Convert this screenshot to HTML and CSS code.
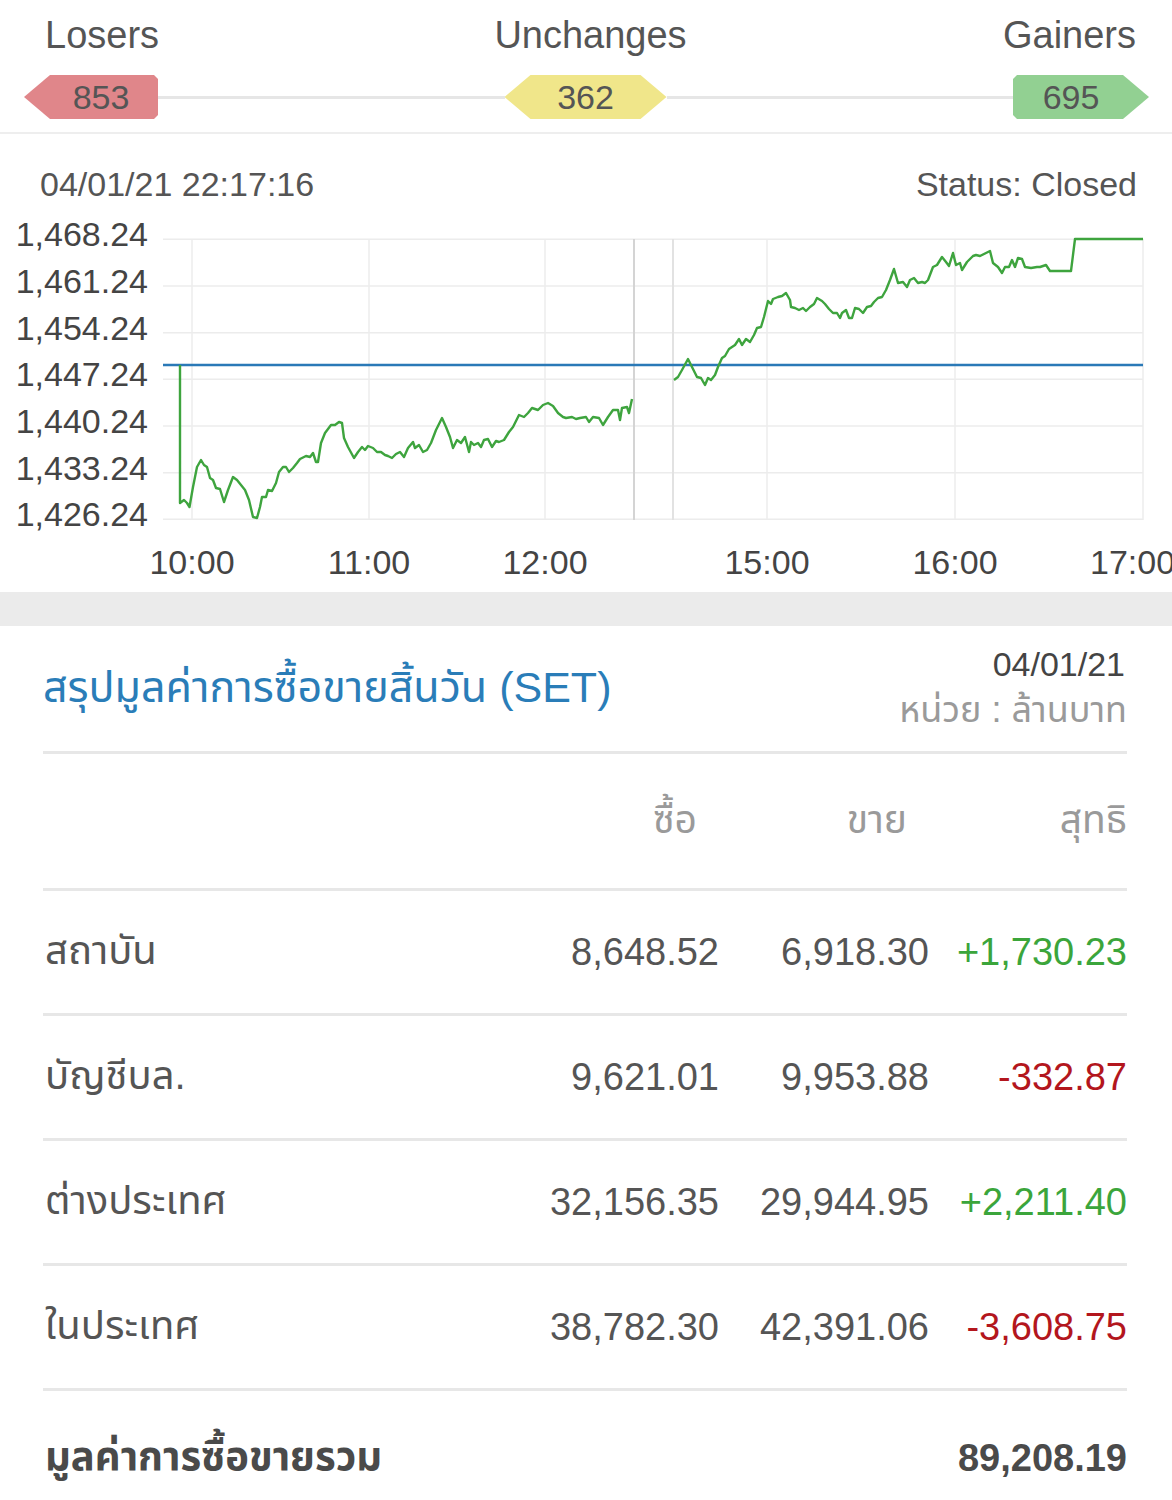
FILE: index.html
```html
<!DOCTYPE html>
<html lang="th">
<head>
<meta charset="utf-8">
<title>SET Summary</title>
<link rel="stylesheet" href="styles.css">
</head>
<body>
<section class="breadth">
  <div class="breadth-labels">
    <span>Losers</span>
    <span>Unchanges</span>
    <span class="lbl-right">Gainers</span>
  </div>
  <div class="breadth-bar">
    <div class="badge badge-down">853</div>
    <div class="track"></div>
    <div class="badge badge-flat">362</div>
    <div class="track"></div>
    <div class="badge badge-up">695</div>
  </div>
</section>

<section class="chart">
  <div class="chart-head">
    <span>04/01/21 22:17:16</span>
    <span>Status: Closed</span>
  </div>
  <svg class="chart-svg" width="1172" height="388" viewBox="0 204 1172 388" xmlns="http://www.w3.org/2000/svg">
    <g stroke="#ececec" stroke-width="1.5" fill="none">
      <line x1="163" y1="239.3" x2="1143" y2="239.3"/>
      <line x1="163" y1="286" x2="1143" y2="286"/>
      <line x1="163" y1="332.7" x2="1143" y2="332.7"/>
      <line x1="163" y1="379.3" x2="1143" y2="379.3"/>
      <line x1="163" y1="426" x2="1143" y2="426"/>
      <line x1="163" y1="472.7" x2="1143" y2="472.7"/>
      <line x1="163" y1="519.3" x2="1143" y2="519.3"/>
      <line x1="192" y1="239" x2="192" y2="520"/>
      <line x1="369" y1="239" x2="369" y2="520"/>
      <line x1="545" y1="239" x2="545" y2="520"/>
      <line x1="767" y1="239" x2="767" y2="520"/>
      <line x1="955" y1="239" x2="955" y2="520"/>
      <line x1="1143" y1="239" x2="1143" y2="520"/>
    </g>
    <line x1="634" y1="239" x2="634" y2="520" stroke="#d4d4d4" stroke-width="2"/>
    <line x1="673" y1="239" x2="673" y2="520" stroke="#e2e2e2" stroke-width="2"/>
    <line x1="163" y1="365" x2="1143" y2="365" stroke="#2a79b7" stroke-width="2.6"/>
    <polyline fill="none" stroke="#3ea43e" stroke-width="2.4" stroke-linejoin="round" points="180,365 180,503 184,500 187,503 189.5,507 193,487 197,467 201,460 204,465 207,467 210,478 213,480 216,488 220,489 224,502 228,490 233,477 237,480 241,485 245,490 249,500 253,517 257,518 260,507 262,497 266,497 268,490 272,491 276,483 279,472 283,467 286,467 289,472 293,468 297,463 300,459 306,456 310,457 313,453 316,462 318,462 321,443 325,433 328,429 331,425 335,425 339,422 342,423 344,438 348,447 354,458 358,452 362,447 365,450 368,446 373,448 377,452 381,452 385,455 388,456 392,458 396,454 400,452 404,457 408,448 413,442 415,448 419,445 423,452 427,450 431,443 436,430 442,418 446,427 450,437 453,448 457,440 461,443 465,437 469,452 471,442 474,445 478,443 481,447 484,440 488,439 492,447 496,441 499,442 504,440 509,432 513,427 519,415 524,417 528,413 532,408 538,410 543,405 548,403 553,406 558,413 563,417 566,418 572,417 576,419 580,418 586,417 589,422 593,417 599,418 603,425 608,417 613,410 618,410 620,420 622,408 627,407 629,413 632,399"/>
    <polyline fill="none" stroke="#3ea43e" stroke-width="2.4" stroke-linejoin="round" points="674,380 678,377 682,370 688,359 691,365 697,377 701,378 705,385 708,378 711,380 715,375 718,367 722,358 725,356 729,349 735,345 739,339 742,345 746,339 750,342 754,335 757,328 761,327 764,317 768,301 771,304 773,299 778,297 782,296 786,293 790,300 791,307 795,308 799,310 803,308 806,311 810,307 814,304 817,298 822,301 825,304 829,309 833,313 837,313 840,318 842,313 846,310 849,318 852,318 855,308 859,309 863,313 867,307 871,306 874,302 878,298 882,297 886,290 890,280 894,269 898,283 903,282 907,287 910,280 914,278 918,283 922,282 925,283 928,280 933,267 937,265 942,257 946,262 949,266 953,253 956,265 960,263 962,270 967,262 973,256 976,255 980,256 986,253 990,251 993,263 998,267 1002,273 1005,267 1009,267 1012,260 1015,267 1018,258 1022,259 1025,267 1031,268 1037,267 1040,267 1046,265 1050,271 1071,271 1075,239 1143,239"/>
    <g class="axis-y" text-anchor="end">
      <text x="148" y="246">1,468.24</text>
      <text x="148" y="293">1,461.24</text>
      <text x="148" y="340">1,454.24</text>
      <text x="148" y="386">1,447.24</text>
      <text x="148" y="433">1,440.24</text>
      <text x="148" y="480">1,433.24</text>
      <text x="148" y="526">1,426.24</text>
    </g>
    <g class="axis-x" text-anchor="middle">
      <text x="192" y="574">10:00</text>
      <text x="369" y="574">11:00</text>
      <text x="545" y="574">12:00</text>
      <text x="767" y="574">15:00</text>
      <text x="955" y="574">16:00</text>
      <text x="1090" y="574" text-anchor="start">17:00</text>
    </g>
  </svg>
</section>

<div class="gap"></div>

<section class="summary">
  <div class="sum-head">
    <h1 class="sum-title">สรุปมูลค่าการซื้อขายสิ้นวัน (SET)</h1>
    <div class="sum-meta">
      <div class="sum-date">04/01/21</div>
      <div class="sum-unit">หน่วย : ล้านบาท</div>
    </div>
  </div>
  <div class="row row-head">
    <span></span>
    <span class="num th pad">ซื้อ</span>
    <span class="num th pad">ขาย</span>
    <span class="num th">สุทธิ</span>
  </div>
  <div class="row">
    <span class="lbl">สถาบัน</span>
    <span class="num">8,648.52</span>
    <span class="num">6,918.30</span>
    <span class="num up">+1,730.23</span>
  </div>
  <div class="row">
    <span class="lbl">บัญชีบล.</span>
    <span class="num">9,621.01</span>
    <span class="num">9,953.88</span>
    <span class="num down">-332.87</span>
  </div>
  <div class="row">
    <span class="lbl">ต่างประเทศ</span>
    <span class="num">32,156.35</span>
    <span class="num">29,944.95</span>
    <span class="num up">+2,211.40</span>
  </div>
  <div class="row">
    <span class="lbl">ในประเทศ</span>
    <span class="num">38,782.30</span>
    <span class="num">42,391.06</span>
    <span class="num down">-3,608.75</span>
  </div>
  <div class="row row-total">
    <span class="lbl">มูลค่าการซื้อขายรวม</span>
    <span class="num total-val">89,208.19</span>
  </div>
</section>
</body>
</html>
```

FILE: styles.css
```css
* { box-sizing: border-box; }

body {
  margin: 0;
  width: 1172px;
  background: #ffffff;
  color: #555555;
  font-family: "Liberation Sans", Arial, "Noto Sans Thai", "Noto Sans Thai UI", "Loma", "Garuda", "Tlwg Typist", sans-serif;
}

/* ---------- market breadth ---------- */
.breadth {
  padding: 13px 0 13px;
  border-bottom: 2px solid #eeeeee;
}

.breadth-labels {
  display: grid;
  grid-template-columns: 1fr auto 1fr;
  padding: 0 36px 0 45px;
  font-size: 38px;
  line-height: 44px;
  color: #555555;
}

.lbl-right { text-align: right; }

.breadth-bar {
  display: flex;
  align-items: center;
  height: 44px;
  margin-top: 18px;
  padding: 0 23px 0 24px;
}

.track {
  flex: 1;
  height: 3px;
  background: #e6e6e6;
}

.badge {
  height: 44px;
  display: flex;
  align-items: center;
  justify-content: center;
  font-size: 34px;
  color: #555555;
}

.badge-down {
  width: 134px;
  padding-left: 20px;
  background: #e0868a;
  clip-path: polygon(26px 0, calc(100% - 4px) 0, 100% 4px, 100% calc(100% - 4px), calc(100% - 4px) 100%, 26px 100%, 0 50%);
}

.badge-flat {
  width: 162px;
  background: #f0e68a;
  clip-path: polygon(26px 0, calc(100% - 26px) 0, 100% 50%, calc(100% - 26px) 100%, 26px 100%, 0 50%);
}

.badge-up {
  width: 136px;
  padding-right: 20px;
  background: #92d092;
  clip-path: polygon(4px 0, calc(100% - 26px) 0, 100% 50%, calc(100% - 26px) 100%, 4px 100%, 0 calc(100% - 4px), 0 4px);
}

/* ---------- chart ---------- */
.chart {
  padding-top: 30px;
}

.chart-head {
  display: flex;
  justify-content: space-between;
  padding: 0 35px 0 40px;
  font-size: 34px;
  line-height: 40px;
  color: #555555;
}

.chart-svg {
  display: block;
}

.axis-y text,
.axis-x text {
  font-family: "Liberation Sans", Arial, sans-serif;
  font-size: 34px;
  fill: #444444;
}

.gap {
  height: 34px;
  background: #ebebeb;
}

/* ---------- summary ---------- */
.summary {
  padding: 0 45px 0 43px;
}

.sum-head {
  display: flex;
  justify-content: space-between;
  align-items: center;
  padding: 16px 0 19px;
  border-bottom: 3px solid #e7e7e7;
}

.sum-title {
  margin: 0;
  font-size: 43px;
  font-weight: normal;
  line-height: 50px;
  color: #2a7db8;
}

.sum-meta {
  text-align: right;
  font-size: 34px;
  line-height: 45px;
}

.sum-date { color: #444444; margin-right: 2px; }
.sum-unit { color: #9a9a9a; font-size: 36px; }

.row {
  display: grid;
  grid-template-columns: 1fr 200px 210px 198px;
  align-items: center;
  height: 125px;
  border-bottom: 3px solid #e7e7e7;
  font-size: 38px;
  color: #555555;
}

.row-head {
  height: 137px;
  color: #9a9a9a;
}

.th { font-size: 39px; }

.num {
  text-align: right;
  white-space: nowrap;
}

.pad { padding-right: 22px; }

.lbl {
  padding-left: 2px;
  white-space: nowrap;
  font-size: 40px;
}

.up { color: #3ba53b; }
.down { color: #b3161d; }

.row-total {
  height: 134px;
  border-bottom: none;
  grid-template-columns: 1fr auto;
  font-weight: bold;
  color: #4a4a4a;
}
```
